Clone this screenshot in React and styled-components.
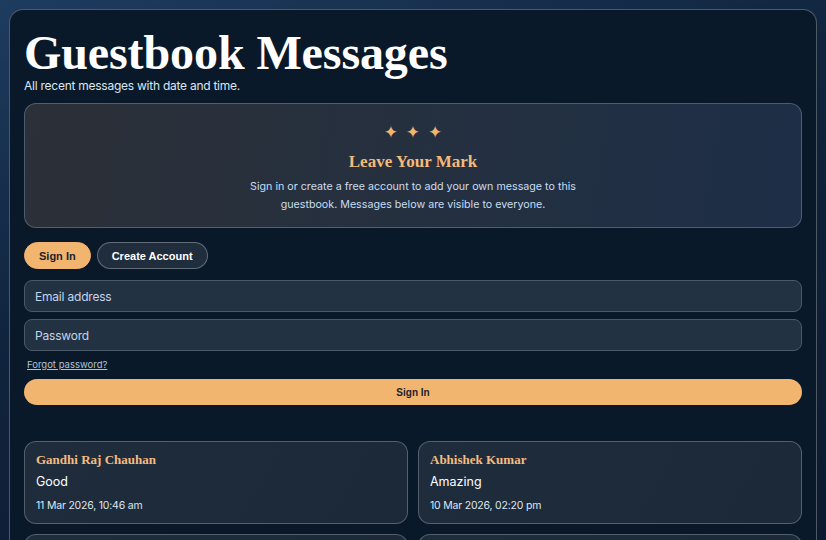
import React from "react"
import styled, { createGlobalStyle } from "styled-components"

const GlobalStyle = createGlobalStyle`
    * { box-sizing: border-box; }
    html, body {
        margin: 0;
        min-height: 100%;
    }
    body {
        background: linear-gradient(160deg, #1e3c5f 0%, #10243d 40%, #0b1a2e 100%);
        background-attachment: fixed;
        font-family: Inter, "Noto Sans", sans-serif;
        color: #e6eef8;
        padding: 9px;
    }
`

const Shell = styled.main`
    width: 808px;
    border: 1px solid rgba(255, 255, 255, 0.28);
    border-radius: 14px;
    background: #0a1929;
    padding: 14px 14px 20px;
`

const Title = styled.h1`
    margin: 0;
    font-family: "Liberation Serif", "DejaVu Serif", serif;
    font-weight: 700;
    font-size: 48px;
    line-height: 1;
    color: #ffffff;
    letter-spacing: -0.1px;
    padding-top: 5px;
`

const Subtitle = styled.p`
    margin: 1px 0 10px;
    font-size: 12px;
    letter-spacing: -0.25px;
    color: #dbe6f2;
`

const Banner = styled.section`
    border: 1px solid rgba(255, 255, 255, 0.22);
    border-radius: 12px;
    background: linear-gradient(100deg, #2c3037 0%, #243040 55%, #1d2e47 100%);
    padding: 17px 20px 13px;
    text-align: center;
`

const Stars = styled.div`
    color: #f2b56f;
    font-family: "DejaVu Sans", sans-serif;
    font-size: 17px;
    letter-spacing: 8px;
    padding-left: 8px;
    line-height: 22px;
`

const BannerTitle = styled.h2`
    margin: 9px 0 6px;
    font-family: "Liberation Serif", "DejaVu Serif", serif;
    font-weight: 700;
    font-size: 17px;
    color: #f4ba7a;
`

const BannerText = styled.p`
    margin: 0 auto;
    max-width: 340px;
    font-size: 10.7px;
    line-height: 18px;
    color: #c9ddf2;
`

const Tabs = styled.div`
    display: flex;
    gap: 6px;
    margin: 14px 0 11px;
`

const Pill = styled.button`
    height: 27px;
    padding: 0 14px;
    border-radius: 14px;
    font-family: "Liberation Sans", Arial, sans-serif;
    font-weight: 700;
    font-size: 11px;
    cursor: pointer;
    border: 1px solid ${p => (p.$active ? "#f2b56f" : "rgba(255, 255, 255, 0.3)")};
    background: ${p => (p.$active ? "#f2b56f" : "#1f2d3d")};
    color: ${p => (p.$active ? "#1b1f2a" : "#ffffff")};
`

const Form = styled.form`
    display: flex;
    flex-direction: column;
    gap: 7px;
`

const Input = styled.input`
    height: 32px;
    width: 100%;
    border-radius: 8px;
    border: 1px solid #4b5868;
    background: #233242;
    padding: 0 10px;
    font-family: Inter, "Noto Sans", sans-serif;
    font-size: 12px;
    letter-spacing: -0.2px;
    color: #e6eef8;
    &::placeholder { color: #c3d4ea; }
`

const Forgot = styled.a`
    margin: 1px 0 2px 3px;
    font-size: 9.5px;
    color: #b6c2d2;
    text-decoration: underline;
`

const Submit = styled.button`
    height: 26px;
    width: 100%;
    border: none;
    border-radius: 13px;
    background: #f2b56f;
    color: #1b1f2a;
    font-family: "Liberation Sans", Arial, sans-serif;
    font-weight: 700;
    font-size: 10px;
    cursor: pointer;
`

const Grid = styled.div`
    display: grid;
    grid-template-columns: 1fr 1fr;
    gap: 10px;
    margin-top: 36px;
`

const MsgCard = styled.article`
    border: 1px solid rgba(255, 255, 255, 0.25);
    border-radius: 12px;
    background: linear-gradient(120deg, #1f2c3c 0%, #1c2938 100%);
    padding: 9px 11px 8px;
    min-height: 83px;
`

const Name = styled.h3`
    margin: 0;
    font-family: "Liberation Serif", "DejaVu Serif", serif;
    font-weight: 700;
    font-size: 13px;
    line-height: 18px;
    color: #f4bd80;
`

const Body = styled.p`
    margin: 4px 0 7px;
    font-size: 12.5px;
    line-height: 18px;
    color: #ffffff;
`

const When = styled.time`
    display: block;
    font-size: 10.5px;
    line-height: 16px;
    letter-spacing: -0.2px;
    color: #dce7f3;
`

const messages = [
    { name: "Gandhi Raj Chauhan", text: "Good", at: "11 Mar 2026, 10:46 am" },
    { name: "Abhishek Kumar", text: "Amazing", at: "10 Mar 2026, 02:20 pm" },
    { name: "Priya Sharma", text: "Lovely site!", at: "09 Mar 2026, 08:12 pm" },
    { name: "Rahul Verma", text: "Great work", at: "08 Mar 2026, 11:05 am" },
]

export default function App() {
    return (
        <>
            <GlobalStyle />
            <Shell>
                <Title>Guestbook Messages</Title>
                <Subtitle>All recent messages with date and time.</Subtitle>

                <Banner>
                    <Stars>✦✦✦</Stars>
                    <BannerTitle>Leave Your Mark</BannerTitle>
                    <BannerText>
                        Sign in or create a free account to add your own message to this
                        guestbook. Messages below are visible to everyone.
                    </BannerText>
                </Banner>

                <Tabs>
                    <Pill $active>Sign In</Pill>
                    <Pill>Create Account</Pill>
                </Tabs>

                <Form onSubmit={e => e.preventDefault()}>
                    <Input type="email" placeholder="Email address" />
                    <Input type="password" placeholder="Password" />
                    <Forgot href="#">Forgot password?</Forgot>
                    <Submit type="submit">Sign In</Submit>
                </Form>

                <Grid>
                    {messages.map(m => (
                        <MsgCard key={m.name}>
                            <Name>{m.name}</Name>
                            <Body>{m.text}</Body>
                            <When>{m.at}</When>
                        </MsgCard>
                    ))}
                </Grid>
            </Shell>
        </>
    )
}
